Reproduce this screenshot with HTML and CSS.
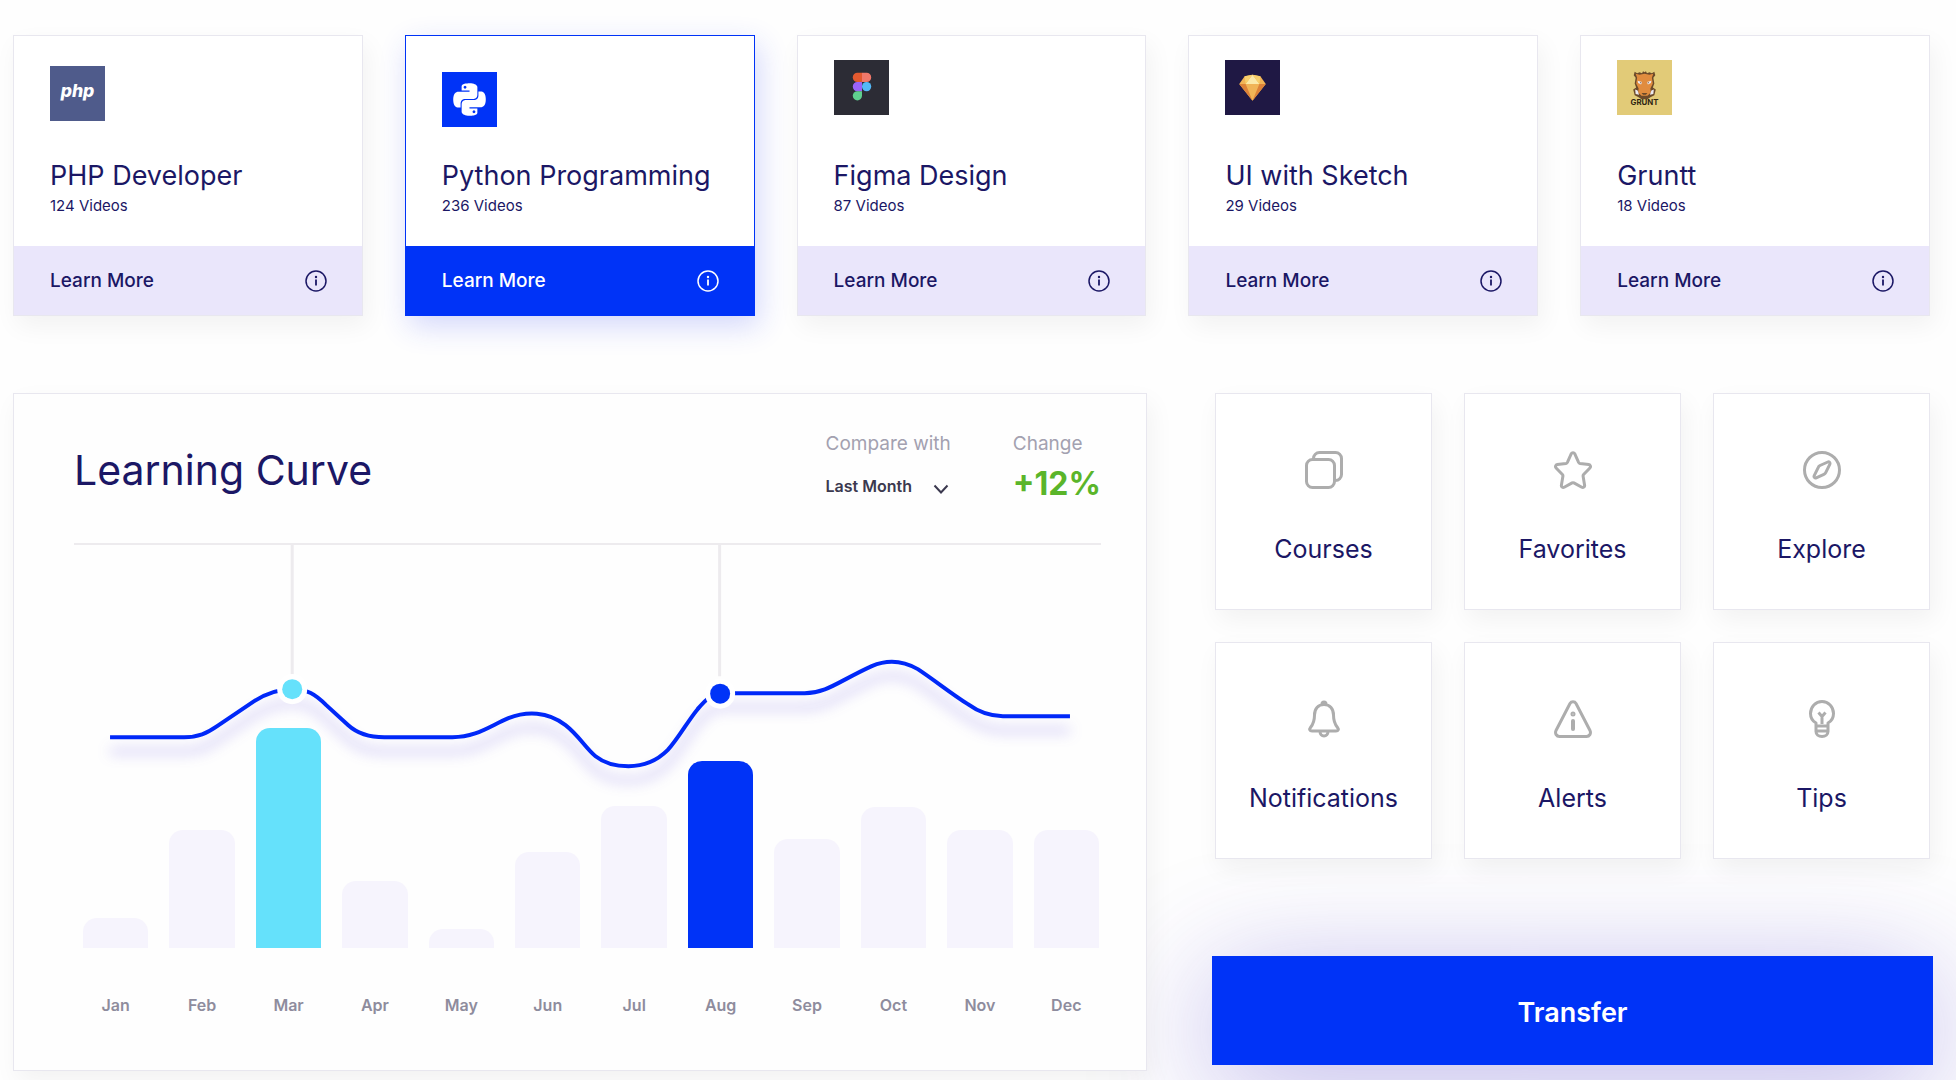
FILE: index.html
```html
<!DOCTYPE html>
<html lang="en">
<head>
<meta charset="utf-8">
<meta name="viewport" content="width=device-width, initial-scale=1">
<title>Learning dashboard</title>
<link rel="stylesheet" href="styles.css">
</head>
<body>
<svg class="defs" aria-hidden="true">
  <symbol id="info" viewBox="0 0 22 22">
    <circle cx="11" cy="11" r="10" fill="none" stroke="currentColor" stroke-width="1.5"/>
    <circle cx="11" cy="7" r="1.2" fill="currentColor"/>
    <path d="M11 9.6v6" stroke="currentColor" stroke-width="1.8"/>
  </symbol>
</svg>

<main class="page">
  <section class="courses" aria-label="Courses">
    <article class="course">
      <div class="course-body course-body--mid">
        <svg class="logo" viewBox="0 0 56 56" aria-hidden="true">
          <rect width="56" height="56" fill="#4f5b8b"/>
          <text class="php" x="28" y="32" text-anchor="middle">php</text>
        </svg>
        <h2 class="course-title">PHP Developer</h2>
        <p class="course-count">124 Videos</p>
      </div>
      <a class="course-link" href="#php">Learn More <svg class="info"><use href="#info"/></svg></a>
    </article>

    <article class="course course--active">
      <div class="course-body course-body--low">
        <svg class="logo" viewBox="0 0 56 56" aria-hidden="true">
          <rect width="56" height="56" fill="#0033f7"/>
          <path transform="translate(11.5 11.5) scale(1.375)" fill="#fff" d="M14.25.18l.9.2.73.26.59.3.45.32.34.34.25.34.16.33.1.3.04.26.02.2-.01.13V8.5l-.05.63-.13.55-.21.46-.26.38-.3.31-.33.25-.35.19-.35.14-.33.1-.3.07-.26.04-.21.02H8.77l-.69.05-.59.14-.5.22-.41.27-.33.32-.27.35-.2.36-.15.37-.1.35-.07.32-.04.27-.02.21v3.06H3.17l-.21-.03-.28-.07-.32-.12-.35-.18-.36-.26-.36-.36-.35-.46-.32-.59-.28-.73-.21-.88-.14-1.05-.05-1.23.06-1.22.16-1.04.24-.87.32-.71.36-.57.4-.44.42-.33.42-.24.4-.16.36-.1.32-.05.24-.01h.16l.06.01h8.16v-.83H6.18l-.01-2.75-.02-.37.05-.34.11-.31.17-.28.25-.26.31-.23.38-.2.44-.18.51-.15.58-.12.64-.1.71-.06.77-.04.84-.02 1.27.05zm-6.3 1.98l-.23.33-.08.41.08.41.23.34.33.22.41.09.41-.09.33-.22.23-.34.08-.41-.08-.41-.23-.33-.33-.22-.41-.09-.41.09zm13.09 3.95l.28.06.32.12.35.18.36.27.36.35.35.47.32.59.28.73.21.88.14 1.04.05 1.23-.06 1.23-.16 1.04-.24.86-.32.71-.36.57-.4.45-.42.33-.42.24-.4.16-.36.09-.32.05-.24.02-.16-.01h-8.22v.82h5.84l.01 2.76.02.36-.05.34-.11.31-.17.29-.25.25-.31.24-.38.2-.44.17-.51.15-.58.13-.64.09-.71.07-.77.04-.84.01-1.27-.04-1.07-.14-.9-.2-.73-.25-.59-.3-.45-.33-.34-.34-.25-.34-.16-.33-.1-.3-.04-.25-.02-.2.01-.13v-5.34l.05-.64.13-.54.21-.46.26-.38.3-.32.33-.24.35-.2.35-.14.33-.1.3-.06.26-.04.21-.02.13-.01h5.84l.69-.05.59-.14.5-.21.41-.28.33-.32.27-.35.2-.36.15-.36.1-.35.07-.32.04-.28.02-.21V6.07h2.09l.14.01zm-6.47 14.25l-.23.33-.08.41.08.41.23.33.33.23.41.08.41-.08.33-.23.23-.33.08-.41-.08-.41-.23-.33-.33-.23-.41-.08-.41.08z"/>
        </svg>
        <h2 class="course-title">Python Programming</h2>
        <p class="course-count">236 Videos</p>
      </div>
      <a class="course-link" href="#python">Learn More <svg class="info"><use href="#info"/></svg></a>
    </article>

    <article class="course">
      <div class="course-body">
        <svg class="logo" viewBox="0 0 56 56" aria-hidden="true">
          <rect width="56" height="56" fill="#2c2c35"/>
          <path fill="#e2592f" d="M28.500 13h-4.700a4.700 4.700 0 0 0 0 9.400h4.700z"/>
          <path fill="#f0786a" d="M28.500 13h4.700a4.700 4.700 0 0 1 0 9.400h-4.700z"/>
          <path fill="#9b63f8" d="M28.500 22.400h-4.700a4.700 4.700 0 0 0 0 9.400h4.700z"/>
          <circle fill="#54b9f8" cx="33.200" cy="27.100" r="4.700"/>
          <path fill="#5fcf8e" d="M28.500 31.800h-4.700a4.700 4.700 0 1 0 4.700 4.700z"/>
        </svg>
        <h2 class="course-title">Figma Design</h2>
        <p class="course-count">87 Videos</p>
      </div>
      <a class="course-link" href="#figma">Learn More <svg class="info"><use href="#info"/></svg></a>
    </article>

    <article class="course">
      <div class="course-body">
        <svg class="logo" viewBox="0 0 56 56" aria-hidden="true">
          <rect width="56" height="56" fill="#1f1844"/>
          <path fill="#f0b456" d="M20 16.500 28 15l8 1.500 5.500 8L28 41.500 14.500 24.500z"/>
          <path fill="#fbe9a8" d="M28 15l7 9.500H21z"/>
          <path fill="#f7cf6c" d="M20 16.500 28 15l-7 9.500zM36 16.500 28 15l7 9.500z"/>
          <path fill="#dc8238" d="M14.500 24.500H21l7 17zM41.500 24.500H35l-7 17z"/>
        </svg>
        <h2 class="course-title">UI with Sketch</h2>
        <p class="course-count">29 Videos</p>
      </div>
      <a class="course-link" href="#sketch">Learn More <svg class="info"><use href="#info"/></svg></a>
    </article>

    <article class="course">
      <div class="course-body">
        <svg class="logo" viewBox="0 0 56 56" aria-hidden="true">
          <rect width="56" height="56" fill="#e2cb78"/>
          <path fill="#6b4a2a" d="M18 12l2.500 1.500L23 12.500l2.500 1 1-2 1.500 1 1.500-1 1 2 2.500-1 2.500 1L38 12l1 3.500-2 2.500 1 6-1.500 4 3 2-1.500 6-4 2-3 2h-6l-3-2-4-2-1.500-6 3-2L18 24l1-6-2-2.500z"/>
          <path fill="#e08c3e" d="M19 14l4 1 5-1 5 1 4-1-1.500 4 1 6-2.500 5 .5 4-3.500 3.500h-6L21.500 33l.5-4-2.500-5 1-6z"/>
          <path fill="#eceaf0" d="M21 21l4.500 1.500-1 2.500-3-1.500zM35 21l-4.500 1.500 1 2.500 3-1.500zM18.500 30l2.500 1 1.500 4.500-3.500-1zM37.500 30l-2.500 1-1.500 4.500 3.500-1z"/>
          <path fill="#6b4a2a" d="M25 33.500h6l-1.500 2h-3zM23.500 22.500l1.500.5-1 1zM32.500 22.500l-1.500.5 1 1z"/>
          <text class="grunt" x="28" y="46" text-anchor="middle">GRUNT</text>
        </svg>
        <h2 class="course-title">Gruntt</h2>
        <p class="course-count">18 Videos</p>
      </div>
      <a class="course-link" href="#grunt">Learn More <svg class="info"><use href="#info"/></svg></a>
    </article>
  </section>

  <div class="lower">
    <section class="panel">
      <header class="panel-head">
        <h1 class="panel-title">Learning Curve</h1>
        <div class="stat">
          <label class="stat-label" for="compare">Compare with</label>
          <span class="picker">
            <select id="compare" class="picker-select">
              <option>Last Month</option>
              <option>Last Year</option>
            </select>
            <svg class="picker-arrow" viewBox="0 0 16 10" aria-hidden="true"><path d="M1.500 1.500 8 8.500l6.500-7" fill="none" stroke="currentColor" stroke-width="2"/></svg>
          </span>
        </div>
        <div class="stat">
          <span class="stat-label">Change</span>
          <strong class="stat-value">+12%</strong>
        </div>
      </header>

      <div class="plot">
        <svg class="curve" viewBox="0 0 1026 404" aria-hidden="true">
          <path class="guide" d="M218 0v131M645 0v131"/>
          <path class="line" d="M36 192H110C124 192 133 188 143 181L180 156C192 148 203 144 218 144C233 144 241 149 252 160L274 180C285 190 298 192 310 192H378C402 192 415 181 434 173C452 166 473 166 491 180C505 191 511 203 521 211C531 219 542 221 554 221C569 221 583 215 593 205C604 193 613 176 623 164C630 156 636 148 650 148H730C752 148 764 136 797 121C813 114 829 116 843 124C861 136 877 149 893 159C904 167 914 171 928 171H995"/>
          <circle cx="218" cy="144" r="15" fill="#fff"/>
          <circle cx="218" cy="144" r="10" fill="#65e1fb"/>
          <circle cx="645.500" cy="148.500" r="15" fill="#fff"/>
          <circle cx="645.500" cy="148.500" r="10" fill="#0033f7"/>
        </svg>
        <div class="bars">
          <div class="bar" style="height:30px"></div>
          <div class="bar" style="height:118px"></div>
          <div class="bar bar--cyan" style="height:220px"></div>
          <div class="bar" style="height:67px"></div>
          <div class="bar" style="height:19px"></div>
          <div class="bar" style="height:96px"></div>
          <div class="bar" style="height:142px"></div>
          <div class="bar bar--blue" style="height:187px"></div>
          <div class="bar" style="height:109px"></div>
          <div class="bar" style="height:141px"></div>
          <div class="bar" style="height:118px"></div>
          <div class="bar" style="height:118px"></div>
        </div>
      </div>
      <div class="months">
        <span>Jan</span><span>Feb</span><span>Mar</span><span>Apr</span><span>May</span><span>Jun</span><span>Jul</span><span>Aug</span><span>Sep</span><span>Oct</span><span>Nov</span><span>Dec</span>
      </div>
    </section>

    <aside class="side">
      <nav class="tiles" aria-label="Shortcuts">
        <a class="tile" href="#courses">
          <svg class="tile-icon" viewBox="0 0 38 38"><rect x="1.500" y="8.500" width="28" height="28" rx="6"/><path d="M8.500 8V7.500a6 6 0 0 1 6-6h16a6 6 0 0 1 6 6v16a6 6 0 0 1-6 6H30"/></svg>
          Courses
        </a>
        <a class="tile" href="#favorites">
          <svg class="tile-icon" viewBox="0 0 38 38"><path d="M17.300 2.700a1.900 1.900 0 0 1 3.400 0l3.900 8.600c.3.600.8 1 1.400 1.100l8.800 1.200a2 2 0 0 1 1.100 3.400l-6.300 6.500a2 2 0 0 0-.5 1.700l1.500 9a1.900 1.900 0 0 1-2.800 2l-7.900-4.300a2 2 0 0 0-1.800 0l-7.900 4.300a1.900 1.900 0 0 1-2.800-2l1.500-9a2 2 0 0 0-.5-1.700l-6.300-6.500a2 2 0 0 1 1.100-3.400l8.800-1.200c.6-.1 1.100-.5 1.400-1.100z"/></svg>
          Favorites
        </a>
        <a class="tile" href="#explore">
          <svg class="tile-icon" viewBox="0 0 38 38"><circle cx="19" cy="19" r="17.500"/><path d="M15.300 16.300c.3-.8.900-1.400 1.700-1.800l7.800-3.500c1.300-.6 2.700.8 2.100 2.100l-4.200 8.600c-.4.800-1 1.400-1.800 1.700l-7.700 3.500c-1.300.6-2.700-.8-2.100-2.100z"/></svg>
          Explore
        </a>
        <a class="tile" href="#notifications">
          <svg class="tile-icon" viewBox="0 0 38 38"><path d="M19 4.500c-6 0-9.500 4.500-9.500 10.500 0 7-1.500 9.500-4 12.500-1.500 2-.8 3.500 1.500 3.500h24c2.300 0 3-1.500 1.500-3.500-2.500-3-4-5.500-4-12.500 0-6-3.500-10.500-9.500-10.500zM17 4a2 2 0 1 1 4 0M15 31.500a4 4.500 0 0 0 8 0"/></svg>
          Notifications
        </a>
        <a class="tile" href="#alerts">
          <svg class="tile-icon" viewBox="0 0 38 38"><path d="M16 3.500a3.500 3.500 0 0 1 6 0l14 27c1.300 3-.5 6-3.500 6h-27c-3 0-4.800-3-3.500-6z"/><path d="M19 21v8" stroke-width="4" stroke-linecap="round"/><circle cx="19" cy="14" r="1"/></svg>
          Alerts
        </a>
        <a class="tile" href="#tips">
          <svg class="tile-icon" viewBox="0 0 38 38"><path d="M13 24.500v-1.500C9.500 21 7.500 17.500 7.500 13.500a11.500 12 0 0 1 23 0c0 4-2 7.500-5.500 9.500v8.500c0 3-2.500 5-6 5s-6-2-6-5zM13 26h12M13 31h12M19 24v-7.500M15.500 12.500l3.500 4 3.500-4"/></svg>
          Tips
        </a>
      </nav>
      <button class="transfer" type="button">Transfer</button>
    </aside>
  </div>
</main>
</body>
</html>
```
FILE: styles.css
```css
* {
  box-sizing: border-box;
}

body {
  margin: 0;
  background: #fefefe;
  color: #1b1765;
  font-family: Inter, "Liberation Sans", sans-serif;
  overflow-x: hidden;
}

h1, h2, p {
  margin: 0;
  font-weight: 400;
}

a {
  color: inherit;
  text-decoration: none;
}

.defs {
  position: absolute;
  width: 0;
  height: 0;
}

.page {
  padding: 35px 26px 9px 13px;
}

/* Course cards */
.courses {
  display: grid;
  grid-template-columns: repeat(5, 1fr);
  gap: 42px;
}

.course {
  display: flex;
  flex-direction: column;
  min-height: 281px;
  border: 1px solid #e8e7ef;
  background: #fff;
  box-shadow: 4px 10px 24px rgba(0, 0, 0, 0.05);
}

.course-body {
  flex: 1;
  display: flex;
  flex-direction: column;
  padding: 24px 36px 30px;
}

.course-body--mid {
  padding-top: 30px;
}

.course-body--low {
  padding-top: 36px;
}

.logo {
  width: 55px;
  height: 55px;
}

.php {
  font: italic 800 18px Inter, "Liberation Sans", sans-serif;
  fill: #fff;
}

.grunt {
  font: 700 8px Inter, "Liberation Sans", sans-serif;
  fill: #2f2512;
}

.course-title {
  margin-top: auto;
  margin-bottom: 4px;
  font-size: 27px;
  line-height: 32px;
  white-space: nowrap;
}

.course-count {
  font-size: 15px;
  line-height: 20px;
}

.course-link {
  display: flex;
  align-items: center;
  justify-content: space-between;
  height: 69px;
  padding: 0 35px 0 36px;
  background: #eae6fb;
  font-size: 19px;
  font-weight: 500;
}

.info {
  width: 22px;
  height: 22px;
}

.course--active {
  border-color: #0033f7;
  box-shadow: 4px 10px 28px rgba(40, 60, 240, 0.2);
}

.course--active .course-link {
  background: #0033f7;
  color: #fff;
}

/* Lower area */
.lower {
  display: grid;
  grid-template-columns: minmax(0, 1134fr) minmax(0, 715fr);
  gap: 68px;
  margin-top: 77px;
}

.panel {
  position: relative;
  z-index: 1;
  padding: 0 45px 53px 60px;
  border: 1px solid #e8e7ef;
  background: #fefefe;
  box-shadow: 4px 10px 24px rgba(0, 0, 0, 0.05);
}

.panel-head {
  display: flex;
  gap: 62px;
  height: 151px;
  padding-top: 38px;
  border-bottom: 2px solid #edebee;
}

.panel-title {
  flex: 1;
  padding-top: 14px;
  font-size: 41px;
  line-height: 48px;
}

.stat {
  display: flex;
  flex-direction: column;
}

.stat-label {
  color: #a3a1b0;
  font-size: 19px;
  line-height: 24px;
}

.stat-value {
  margin-top: 8px;
  color: #5ab52a;
  font-size: 32px;
  line-height: 40px;
  font-weight: 700;
}

.picker {
  position: relative;
  margin-top: 18px;
}

.picker-select {
  width: 100%;
  height: 24px;
  padding: 0;
  border: 0;
  appearance: none;
  background: transparent;
  color: #3b394f;
  font: 600 16px Inter, "Liberation Sans", sans-serif;
}

.picker-arrow {
  position: absolute;
  right: 2px;
  top: 10px;
  width: 16px;
  height: 10px;
  color: #3b394f;
  pointer-events: none;
}

.plot {
  position: relative;
  display: flex;
  height: 403px;
}

.curve {
  position: absolute;
  left: 0;
  top: 0;
  width: 100%;
  overflow: visible;
}

.guide {
  stroke: #edebee;
  stroke-width: 3;
}

.line {
  fill: none;
  stroke: #0028f8;
  stroke-width: 4;
  filter: drop-shadow(0 14px 7px rgba(90, 70, 220, 0.4));
}

.bars,
.months {
  display: grid;
  grid-template-columns: repeat(12, minmax(0, 1fr));
  gap: 21px;
  flex: 1;
  padding: 0 2px 0 9px;
}

.bars {
  align-items: end;
}

.bar {
  border-radius: 14px 14px 0 0;
  background: #f6f4fd;
}

.bar--cyan {
  background: #65e1fb;
}

.bar--blue {
  background: #0033f7;
}

.months {
  margin-top: 45px;
  color: #8e8c9d;
  font-size: 16px;
  font-weight: 600;
  line-height: 24px;
  text-align: center;
}

/* Shortcuts */
.tiles {
  position: relative;
  z-index: 1;
  display: grid;
  grid-template-columns: repeat(3, 1fr);
  gap: 32px;
}

.tile {
  display: flex;
  flex-direction: column;
  align-items: center;
  gap: 44px;
  min-height: 217px;
  padding-top: 57px;
  border: 1px solid #e8e7ef;
  background: #fff;
  box-shadow: 4px 10px 24px rgba(0, 0, 0, 0.05);
  font-size: 25px;
  line-height: 32px;
}

.tile-icon {
  width: 38px;
  height: 38px;
  fill: none;
  stroke: #adadad;
  stroke-width: 3;
  stroke-linejoin: round;
}

.transfer {
  display: block;
  width: calc(100% + 6px);
  height: 109px;
  margin: 97px -3px 0;
  padding-top: 4px;
  border: 0;
  background: #0033f7;
  color: #fff;
  font: 600 27px Inter, "Liberation Sans", sans-serif;
  box-shadow: 0 20px 120px rgba(70, 50, 200, 0.36);
}
```
